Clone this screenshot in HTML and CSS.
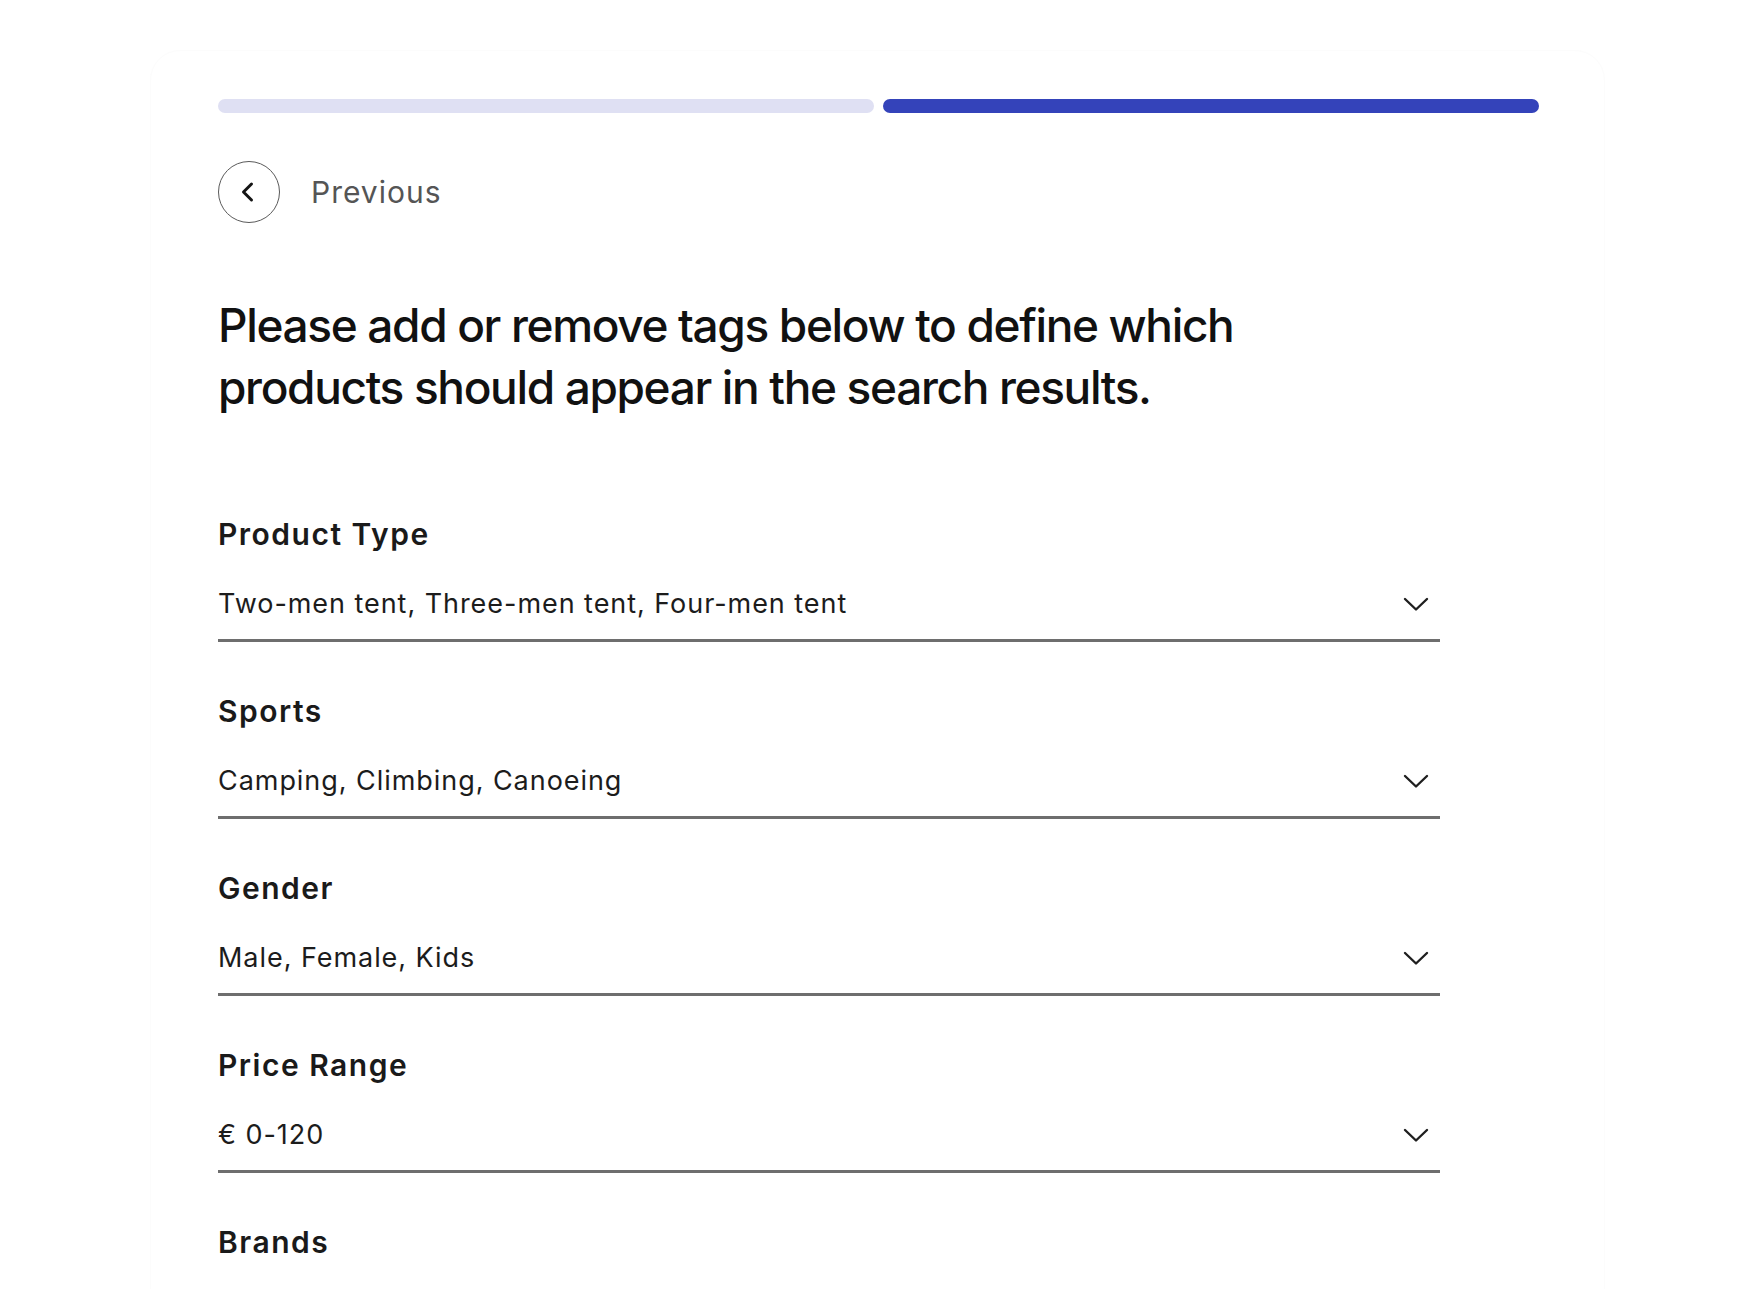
FILE: index.html
```html
<!DOCTYPE html>
<html lang="en">
<head>
<meta charset="utf-8">
<title>Search tags</title>
<link rel="stylesheet" href="styles.css">
</head>
<body>
<div class="card">
  <div class="progress">
    <div class="step step-done"></div>
    <div class="step step-active"></div>
  </div>

  <div class="back">
    <span class="back-circle">
      <svg width="20" height="24" viewBox="0 0 20 24" aria-hidden="true">
        <path d="M13.5 4 L5.5 12 L13.5 20" fill="none" stroke="#141414" stroke-width="3" stroke-linecap="round" stroke-linejoin="round"/>
      </svg>
    </span>
    <span class="back-label">Previous</span>
  </div>

  <h1 class="title">Please add or remove tags below to define which<br>products should appear in the search results.</h1>

  <div class="group">
    <div class="label">Product Type</div>
    <div class="field">
      <span class="value">Two-men tent, Three-men tent, Four-men tent</span>
      <svg class="chev" width="26" height="15" viewBox="0 0 26 15" aria-hidden="true"><path d="M2 2 L13 12.5 L24 2" fill="none" stroke="#1f1f1f" stroke-width="2.4" stroke-linecap="round" stroke-linejoin="round"/></svg>
    </div>
  </div>

  <div class="group">
    <div class="label">Sports</div>
    <div class="field">
      <span class="value">Camping, Climbing, Canoeing</span>
      <svg class="chev" width="26" height="15" viewBox="0 0 26 15" aria-hidden="true"><path d="M2 2 L13 12.5 L24 2" fill="none" stroke="#1f1f1f" stroke-width="2.4" stroke-linecap="round" stroke-linejoin="round"/></svg>
    </div>
  </div>

  <div class="group">
    <div class="label">Gender</div>
    <div class="field">
      <span class="value">Male, Female, Kids</span>
      <svg class="chev" width="26" height="15" viewBox="0 0 26 15" aria-hidden="true"><path d="M2 2 L13 12.5 L24 2" fill="none" stroke="#1f1f1f" stroke-width="2.4" stroke-linecap="round" stroke-linejoin="round"/></svg>
    </div>
  </div>

  <div class="group">
    <div class="label">Price Range</div>
    <div class="field">
      <span class="value">€ 0-120</span>
      <svg class="chev" width="26" height="15" viewBox="0 0 26 15" aria-hidden="true"><path d="M2 2 L13 12.5 L24 2" fill="none" stroke="#1f1f1f" stroke-width="2.4" stroke-linecap="round" stroke-linejoin="round"/></svg>
    </div>
  </div>

  <div class="group">
    <div class="label">Brands</div>
  </div>
</div>
</body>
</html>
```

FILE: styles.css
```css
html, body {
  margin: 0;
  padding: 0;
  background: #ffffff;
}

body {
  font-family: Inter, "Noto Sans", "Liberation Sans", sans-serif;
  color: #141414;
  overflow: hidden;
  height: 1289px;
}

.card {
  margin: 50px 0 0 150px;
  width: 1455px;
  min-height: 1400px;
  box-sizing: border-box;
  padding: 48px 0 0 67px;
  border-radius: 30px;
  border: 1px solid #fcfcfc;
  background: #ffffff;
}

.progress {
  display: flex;
  gap: 9px;
  width: 1321px;
  height: 14px;
}

.step {
  flex: 1;
  border-radius: 7px;
}

.step-done {
  background: #dfe0f3;
}

.step-active {
  background: #3443ba;
}

.back {
  display: flex;
  align-items: center;
  gap: 31px;
  margin-top: 48px;
}

.back-circle {
  width: 60px;
  height: 60px;
  border: 1.5px solid #5a5a5a;
  border-radius: 50%;
  display: flex;
  align-items: center;
  justify-content: center;
}

.back-circle svg {
  margin-left: -2px;
}

.back-label {
  font-size: 30px;
  font-weight: 400;
  color: #555555;
  letter-spacing: 1px;
}

.title {
  margin: 71px 0 0 0;
  font-size: 46px;
  line-height: 62px;
  font-weight: 500;
  letter-spacing: -1.35px;
  color: #111111;
}

.group {
  width: 1222px;
  margin-bottom: 51px;
}

.title + .group {
  margin-top: 98px;
}

.label {
  font-size: 30px;
  line-height: 36px;
  font-weight: 600;
  color: #1a1a1a;
  letter-spacing: 1.5px;
}

.field {
  margin-top: 34px;
  padding: 0 11px 17px 0;
  border-bottom: 3px solid #6e6e6e;
  display: flex;
  align-items: center;
  justify-content: space-between;
}

.value {
  font-size: 27px;
  line-height: 36px;
  font-weight: 400;
  color: #1c1c1c;
  letter-spacing: 0.95px;
}

.chev {
  display: block;
}
```
